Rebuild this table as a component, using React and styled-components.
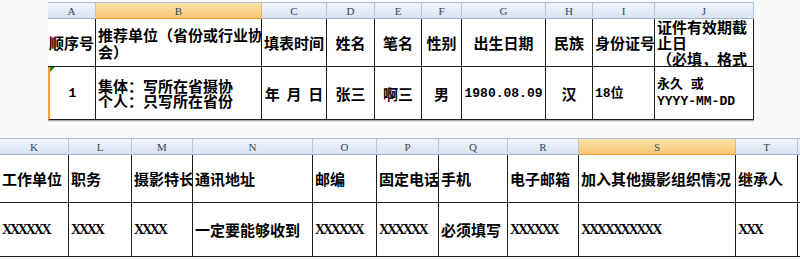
import React from 'react';
import styled, { createGlobalStyle } from 'styled-components';

const GlobalStyle = createGlobalStyle`
  html, body {
    margin: 0;
    padding: 0;
    background: #f9f9f9;
  }
  body {
    width: 800px;
    height: 260px;
    overflow: hidden;
    font-family: "Noto Sans CJK SC", sans-serif;
  }
`;

const topColumns = [
  { letter: 'A', width: 48 },
  { letter: 'B', width: 166, selected: true },
  { letter: 'C', width: 65 },
  { letter: 'D', width: 48 },
  { letter: 'E', width: 47 },
  { letter: 'F', width: 40 },
  { letter: 'G', width: 84 },
  { letter: 'H', width: 47 },
  { letter: 'I', width: 62 },
  { letter: 'J', width: 99 },
];

const topRows = [
  [
    { text: '顺序号', align: 'center' },
    { text: '推荐单位（省份或行业协\n会）', lh: 17 },
    { text: '填表时间', align: 'center' },
    { text: '姓名', align: 'center' },
    { text: '笔名', align: 'center' },
    { text: '性别', align: 'center' },
    { text: '出生日期', align: 'center' },
    { text: '民族', align: 'center' },
    { text: '身份证号' },
    { text: '证件有效期截\n止日\n（必填，格式', valign: 'flex-start', lh: 16 },
  ],
  [
    { text: '1', align: 'center', latin: true, marker: true },
    { text: '集体：写所在省摄协\n个人：只写所在省份', lh: 15 },
    { text: '年  月  日', align: 'center' },
    { text: '张三', align: 'center' },
    { text: '啊三', align: 'center' },
    { text: '男', align: 'center' },
    { text: '1980.08.09', align: 'center', latin: true },
    { text: '汉', align: 'center' },
    { text: '18位', latin: true },
    { text: '永久 或\nYYYY-MM-DD', latin: true, lh: 17 },
  ],
];

const bottomColumns = [
  { letter: 'K', width: 69 },
  { letter: 'L', width: 63 },
  { letter: 'M', width: 61 },
  { letter: 'N', width: 120 },
  { letter: 'O', width: 64 },
  { letter: 'P', width: 62 },
  { letter: 'Q', width: 69 },
  { letter: 'R', width: 71 },
  { letter: 'S', width: 157, selected: true },
  { letter: 'T', width: 62 },
  { letter: '', width: 60 },
];

const bottomRows = [
  [
    { text: '工作单位' },
    { text: '职务' },
    { text: '摄影特长' },
    { text: '通讯地址' },
    { text: '邮编' },
    { text: '固定电话' },
    { text: '手机' },
    { text: '电子邮箱' },
    { text: '加入其他摄影组织情况' },
    { text: '继承人' },
    { text: '' },
  ],
  [
    { text: 'XXXXXX', x: true },
    { text: 'XXXX', x: true },
    { text: 'XXXX', x: true },
    { text: '一定要能够收到' },
    { text: 'XXXXXX', x: true },
    { text: 'XXXXXX', x: true },
    { text: '必须填写' },
    { text: 'XXXXXX', x: true },
    { text: 'XXXXXXXXXX', x: true },
    { text: 'XXX', x: true },
    { text: '' },
  ],
];

function Sheet({ columns, rows, heights, offset }) {
  const template = columns.map((c) => `${c.width}px`).join(' ');
  return (
    <Grid $cols={template} $rows={heights} $offset={offset}>
      {columns.map((c, i) => (
        <HeadCell key={i} $selected={c.selected}>
          {c.letter}
        </HeadCell>
      ))}
      {rows.map((row, r) =>
        row.map((cell, i) => (
          <Cell
            key={`${r}-${i}`}
            $align={cell.align}
            $valign={cell.valign}
            $latin={cell.latin}
            $x={cell.x}
            $lh={cell.lh}
            $marker={cell.marker}
          >
            {cell.marker && <Marker />}
            <span>{cell.text}</span>
          </Cell>
        ))
      )}
    </Grid>
  );
}

export default function App() {
  return (
    <>
      <GlobalStyle />
      <Page>
        <Sheet
          columns={topColumns}
          rows={topRows}
          heights="16px 48px 53px"
          offset={48}
        />
        <Sheet
          columns={bottomColumns}
          rows={bottomRows}
          heights="16px 48px 54px"
          offset={0}
        />
      </Page>
    </>
  );
}

const Page = styled.div`
  display: flex;
  flex-direction: column;
  gap: 18px;
  padding-top: 2px;
  width: 800px;
  overflow: hidden;
`;

const Grid = styled.div`
  display: grid;
  grid-template-columns: ${(p) => p.$cols};
  grid-template-rows: ${(p) => p.$rows};
  margin-left: ${(p) => p.$offset}px;
  width: max-content;
  border-top: 1px solid #a9bfd6;
  box-shadow: 0 1px 0 #b0b0b0, 0 2px 0 #dcdcdc;
  background: #fff;
`;

const HeadCell = styled.div`
  box-sizing: border-box;
  display: flex;
  align-items: center;
  justify-content: center;
  font-family: "Liberation Serif", serif;
  font-size: 11px;
  color: #33475e;
  border-right: 1px solid ${(p) => (p.$selected ? '#f2b35a' : '#b4c7dc')};
  border-bottom: 1px solid ${(p) => (p.$selected ? '#f29436' : '#9fb6cf')};
  background: ${(p) =>
    p.$selected
      ? 'linear-gradient(#fbe2a6, #f8d38a 60%, #f6c774)'
      : 'linear-gradient(#f1f5fb, #e3ebf5 55%, #d9e3f0)'};
`;

const Cell = styled.div`
  position: relative;
  box-sizing: border-box;
  display: flex;
  align-items: ${(p) => p.$valign || 'center'};
  justify-content: ${(p) =>
    p.$align === 'center' ? 'center' : 'flex-start'};
  padding: 0 2px;
  overflow: hidden;
  border-right: 1px solid #1e1e1e;
  border-bottom: 1px solid #1e1e1e;
  border-left: ${(p) => (p.$marker ? '2px solid #f4a43c' : 'none')};
  color: #000;
  font-family: ${(p) =>
    p.$x
      ? '"Liberation Serif", serif'
      : p.$latin
      ? '"Liberation Mono", "Noto Sans CJK SC", monospace'
      : '"Noto Sans CJK SC", sans-serif'};
  font-size: ${(p) => (p.$x ? '14px' : p.$latin ? '13px' : '15px')};
  font-weight: 700;
  letter-spacing: ${(p) => (p.$x ? '-2.2px' : '0')};
  line-height: ${(p) => (p.$lh ? `${p.$lh}px` : '17px')};
  white-space: pre;
  text-align: left;

  span {
    display: block;
  }
`;

const Marker = styled.i`
  position: absolute;
  top: 0;
  left: 0;
  width: 0;
  height: 0;
  border-top: 5px solid #1a8a1a;
  border-right: 5px solid transparent;
`;
